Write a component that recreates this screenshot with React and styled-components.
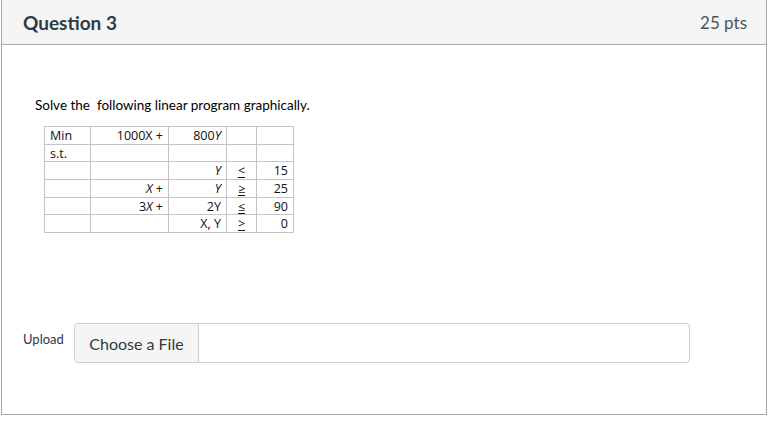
import styled, { createGlobalStyle } from "styled-components";

const GlobalStyle = createGlobalStyle`
  body {
    margin: 0;
    background: #ffffff;
    font-family: Lato, "Noto Sans", sans-serif;
    color: #2d3b45;
  }
`;

const lineColor = "#a8a8a8";

const Panel = styled.div`
  width: 766px;
  margin-left: 1px;
  border: 1px solid ${lineColor};
  border-top: none;
  height: 415px;
  box-sizing: border-box;
  display: flex;
  flex-direction: column;
`;

const Header = styled.div`
  height: 45px;
  box-sizing: border-box;
  background: #f5f5f5;
  border-bottom: 1px solid ${lineColor};
  display: flex;
  align-items: center;
  justify-content: space-between;
  padding: 0 19px 0 21px;
`;

const Title = styled.h2`
  margin: 0;
  font-size: 19px;
  font-weight: 700;
  color: #2d3b45;
`;

const Points = styled.span`
  font-size: 17px;
  color: #4b5358;
`;

const Body = styled.div`
  flex: 1;
  padding: 52px 21px 0 20px;
  display: flex;
  flex-direction: column;
  align-items: flex-start;
`;

const Prompt = styled.p`
  margin: 0 0 0 13px;
  font-size: 13.5px;
  line-height: 17px;
  color: #000;
  white-space: pre;
`;

const Table = styled.table`
  margin: 12px 0 0 22px;
  border-collapse: collapse;
  table-layout: fixed;
  font-family: "Open Sans", Lato, sans-serif;
  font-size: 12.5px;
  color: #111;
`;

const Cell = styled.td`
  border: 1px solid #c4c4c4;
  height: 17.7px;
  padding: 0 5px;
  line-height: 15px;
  width: ${(p) => p.$w}px;
  text-align: ${(p) => p.$align || "left"};
  box-sizing: border-box;
  white-space: nowrap;
  overflow: hidden;
`;

const Sym = styled.span`
  text-decoration: underline;
  text-underline-offset: 2px;
`;

const UploadRow = styled.div`
  margin-top: 90px;
  display: flex;
  align-items: flex-start;
`;

const UploadLabel = styled.label`
  font-size: 13px;
  color: #2d3b45;
  margin: 8px 0 0 1px;
  width: 51px;
`;

const FileBox = styled.div`
  width: 616px;
  height: 40px;
  box-sizing: border-box;
  border: 1px solid #c7cdd1;
  border-radius: 4px;
  display: flex;
`;

const ChooseButton = styled.button`
  width: 124px;
  height: 38px;
  margin: 0;
  background: #f5f5f5;
  border: none;
  border-right: 1px solid #c7cdd1;
  border-radius: 3px 0 0 3px;
  font-family: Lato, sans-serif;
  font-size: 16px;
  color: #2d3b45;
  cursor: pointer;
`;

const widths = [46, 78, 58, 30, 37];
const aligns = ["left", "right", "right", "center", "right"];

const rows = [
  ["Min", "1000X +", <>800<i>Y</i></>, "", ""],
  ["s.t.", "", "", "", ""],
  ["", "", <i>Y</i>, <Sym>&lt;</Sym>, "15"],
  ["", <><i>X</i> +</>, <i>Y</i>, <Sym>≥</Sym>, "25"],
  ["", <>3<i>X</i> +</>, "2Y", <Sym>≤</Sym>, "90"],
  ["", "", "X, Y", <Sym>&gt;</Sym>, "0"],
];

export default function App() {
  return (
    <>
      <GlobalStyle />
      <Panel>
        <Header>
          <Title>Question 3</Title>
          <Points>25 pts</Points>
        </Header>
        <Body>
          <Prompt>Solve the  following linear program graphically.</Prompt>
          <Table>
            <colgroup>
              {widths.map((w, i) => (
                <col key={i} style={{ width: w }} />
              ))}
            </colgroup>
            <tbody>
              {rows.map((r, i) => (
                <tr key={i}>
                  {r.map((c, j) => (
                    <Cell key={j} $w={widths[j]} $align={aligns[j]}>
                      {c}
                    </Cell>
                  ))}
                </tr>
              ))}
            </tbody>
          </Table>
          <UploadRow>
            <UploadLabel>Upload</UploadLabel>
            <FileBox>
              <ChooseButton>Choose a File</ChooseButton>
            </FileBox>
          </UploadRow>
        </Body>
      </Panel>
    </>
  );
}
